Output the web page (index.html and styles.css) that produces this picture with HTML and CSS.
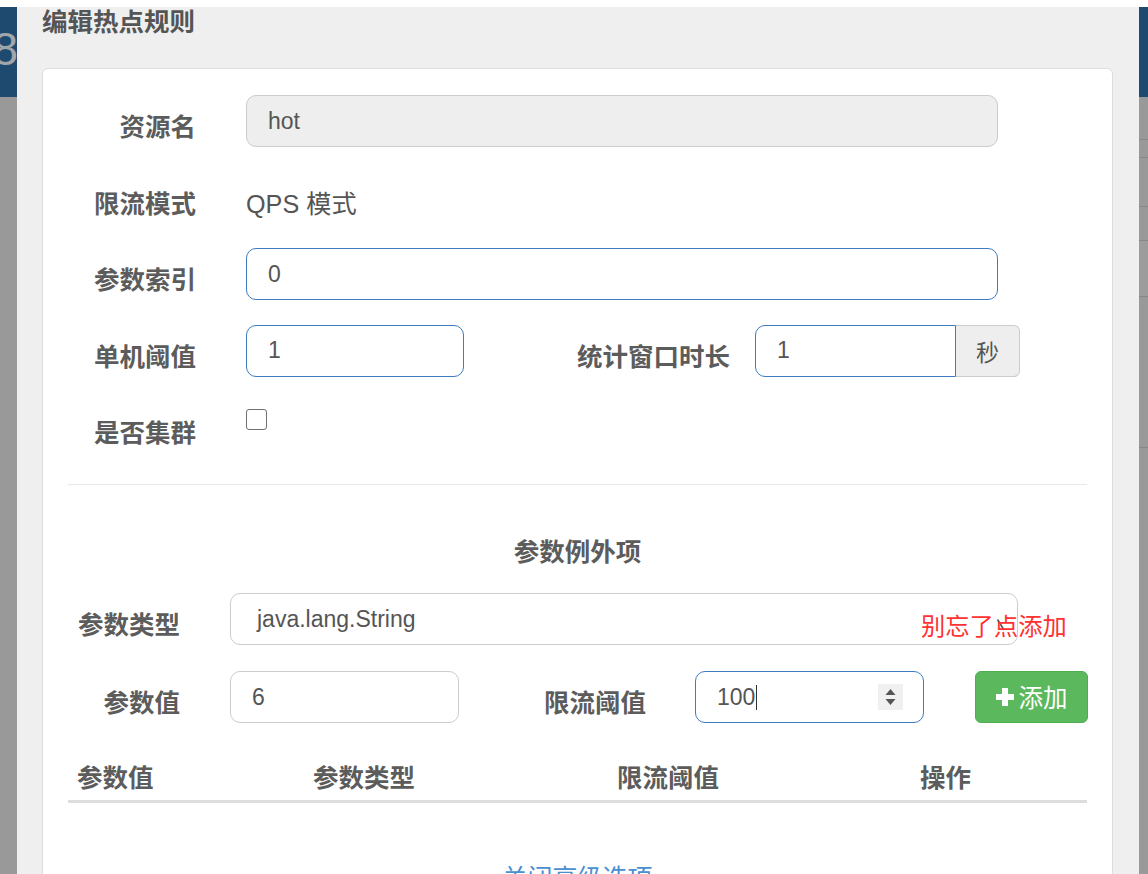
FILE: index.html
```html
<!DOCTYPE html>
<html lang="zh-CN">
<head>
<meta charset="utf-8">
<title>编辑热点规则</title>
<link rel="stylesheet" href="styles.css">
</head>
<body>
<div class="page">
  <div class="page-top"></div>
  <div class="navbar"><span class="brand">8</span></div>
  <div class="bg-rows">
    <div class="bg-row r1"></div>
    <div class="bg-row r2"></div>
    <div class="bg-row r3"></div>
    <div class="bg-row r4"></div>
    <div class="bg-row r5"></div>
    <div class="bg-row r6"></div>
  </div>
</div>

<div class="modal">
  <div class="modal-header">
    <h4 class="modal-title">编辑热点规则</h4>
  </div>
  <div class="card">
    <div class="form-row">
      <label class="lbl lbl-a">资源名</label>
      <div class="field field-wide field-disabled">hot</div>
    </div>
    <div class="form-row">
      <label class="lbl lbl-a">限流模式</label>
      <div class="static">QPS 模式</div>
    </div>
    <div class="form-row">
      <label class="lbl lbl-a">参数索引</label>
      <div class="field field-wide field-focus">0</div>
    </div>
    <div class="form-row">
      <label class="lbl lbl-a">单机阈值</label>
      <div class="field field-short field-focus">1</div>
      <label class="lbl lbl-window">统计窗口时长</label>
      <div class="input-group">
        <div class="field field-group field-focus">1</div>
        <span class="addon">秒</span>
      </div>
    </div>
    <div class="form-row row-check">
      <label class="lbl lbl-a">是否集群</label>
      <span class="checkbox"></span>
    </div>

    <hr class="divider">

    <h4 class="section-title">参数例外项</h4>

    <div class="form-row row-type">
      <label class="lbl lbl-b">参数类型</label>
      <div class="field field-select">java.lang.String
        <svg class="select-mark" width="10" height="14" viewBox="0 0 10 14"><path d="M1.5 1.5 L8 12" stroke="#555" stroke-width="1.6" fill="none"/></svg>
      </div>
      <span class="annotation">别忘了点添加</span>
    </div>
    <div class="form-row">
      <label class="lbl lbl-b">参数值</label>
      <div class="field field-value">6</div>
      <label class="lbl lbl-limit">限流阈值</label>
      <div class="field field-value field-focus field-number">100<span class="caret"></span>
        <span class="spinner">
          <svg width="25" height="26" viewBox="0 0 25 26"><path d="M7.5 11 L12.5 5 L17.5 11 Z" fill="#555"/><path d="M7.5 15 L17.5 15 L12.5 21 Z" fill="#555"/></svg>
        </span>
      </div>
      <button class="btn-add" type="button">
        <svg class="plus" width="18" height="18" viewBox="0 0 18 18"><path d="M6 0h6v6h6v6h-6v6h-6v-6h-6v-6h6z" fill="#fff"/></svg>
        <span>添加</span>
      </button>
    </div>

    <div class="table-head">
      <div class="th">参数值</div>
      <div class="th">参数类型</div>
      <div class="th">限流阈值</div>
      <div class="th">操作</div>
    </div>

    <div class="toggle-link"><a class="link">关闭高级选项</a></div>
  </div>
</div>
</body>
</html>
```

FILE: styles.css
```css
* { box-sizing: border-box; }

html, body {
  margin: 0;
  padding: 0;
  width: 1148px;
  height: 874px;
  overflow: hidden;
}

body {
  position: relative;
  background: #999999;
  font-family: "Liberation Sans", "Noto Sans CJK SC", sans-serif;
}

/* background page (dimmed) */
.page-top {
  height: 7px;
  background: #ffffff;
}

.navbar {
  height: 90px;
  background: #1e4a70;
  padding-top: 19px;
}

.brand {
  display: flex;
  justify-content: flex-end;
  width: 18px;
  overflow: hidden;
  font-size: 46px;
  line-height: 46px;
  color: #a1a5aa;
}

.bg-rows {
  margin-left: 1000px;
}

.bg-row {
  border-bottom: 1px solid #878787;
}

.r1 { height: 43px; }
.r2 { height: 18px; }
.r3 { height: 49px; }
.r4 { height: 34px; }
.r5 { height: 56px; background: #9c9c9c; }
.r6 { height: 151px; }

/* modal */
.modal {
  position: absolute;
  left: 17px;
  top: 7px;
  width: 1122px;
  height: 900px;
  background: #efefef;
}

.modal-header {
  height: 61px;
  padding-left: 25px;
}

.modal-title {
  margin: 0;
  padding-top: 0;
  font-family: "Noto Sans CJK SC", sans-serif;
  font-size: 25.5px;
  line-height: 25px;
  font-weight: bold;
  color: #555555;
}

.card {
  margin-left: 25px;
  width: 1071px;
  height: 900px;
  background: #ffffff;
  border: 1px solid #dddddd;
  border-radius: 6px;
  padding: 26px 25px 0 25px;
}

/* form rows */
.form-row {
  position: relative;
  display: flex;
  align-items: flex-start;
  height: 52px;
  margin-bottom: 24.5px;
}

.lbl {
  flex: none;
  font-family: "Noto Sans CJK SC", sans-serif;
  font-size: 25.5px;
  line-height: 30px;
  font-weight: bold;
  color: #5c5c5c;
  text-align: right;
  padding-top: 15px;
  white-space: nowrap;
}

.lbl-a { width: 128px; margin-right: 50px; }
.lbl-b { width: 112px; margin-right: 50px; }
.lbl-window { width: 266px; margin-right: 25px; }
.lbl-limit { width: 187px; margin-right: 49px; }

.static {
  font-size: 25.2px;
  line-height: 30px;
  padding-top: 17px;
  color: #555555;
  white-space: nowrap;
}

.field {
  position: relative;
  flex: none;
  display: flex;
  align-items: center;
  height: 52px;
  padding: 0 21px;
  border: 1px solid #cccccc;
  border-radius: 10px;
  background: #ffffff;
  font-size: 23px;
  color: #555555;
  white-space: nowrap;
}

.field-wide { width: 752px; }
.field-short { width: 218px; }
.field-disabled { background: #eeeeee; }
.field-focus { border-color: #3d7cbf; }

.input-group {
  display: flex;
  flex: none;
}

.field-group {
  width: 201px;
  border-radius: 10px 0 0 10px;
}

.addon {
  display: flex;
  align-items: center;
  justify-content: center;
  width: 64px;
  height: 52px;
  background: #eeeeee;
  border: 1px solid #cccccc;
  border-left: none;
  border-radius: 0 6px 6px 0;
  font-size: 23px;
  color: #555555;
}

.row-check { margin-bottom: 31px; }

.checkbox {
  display: block;
  width: 21px;
  height: 21px;
  margin-top: 8px;
  border: 1px solid #707070;
  border-radius: 3px;
  background: #ffffff;
}

.divider {
  margin: 0;
  border: none;
  border-top: 1px solid #e8e8e8;
}

.section-title {
  margin: 47px 0 25px 0;
  font-family: "Noto Sans CJK SC", sans-serif;
  font-size: 25.5px;
  line-height: 36px;
  font-weight: bold;
  color: #5c5c5c;
  text-align: center;
}

.row-type { margin-bottom: 26px; }

.field-select {
  width: 788px;
  padding-left: 26px;
}

.select-mark {
  position: absolute;
  left: 765px;
  top: 24px;
}

.annotation {
  position: absolute;
  left: 853px;
  top: 17px;
  font-family: "Noto Sans CJK SC", sans-serif;
  font-size: 24.3px;
  line-height: 30px;
  color: #ff3131;
  white-space: nowrap;
}

.field-value { width: 229px; }

.caret {
  display: inline-block;
  width: 1px;
  height: 25px;
  margin-left: 1px;
  background: #333333;
}

.spinner {
  position: absolute;
  right: 20px;
  top: 12px;
  width: 25px;
  height: 26px;
  background: #f0f0f0;
}

.spinner svg { display: block; }

.btn-add {
  flex: none;
  display: flex;
  align-items: center;
  justify-content: center;
  gap: 5px;
  width: 113px;
  height: 52px;
  margin-left: 51px;
  padding: 0;
  background: #5cb85c;
  border: 1px solid #4cae4c;
  border-radius: 6px;
  color: #ffffff;
  font-family: "Noto Sans CJK SC", sans-serif;
  font-size: 24.5px;
  line-height: 30px;
}

.plus { display: block; flex: none; }

.table-head {
  display: grid;
  grid-template-columns: 236px 304px 303px 1fr;
  margin-top: 28px;
  border-bottom: 3px solid #dddddd;
}

.th {
  padding: 9.5px 9px;
  font-family: "Noto Sans CJK SC", sans-serif;
  font-size: 25.5px;
  line-height: 30px;
  font-weight: bold;
  color: #5c5c5c;
  white-space: nowrap;
}

.toggle-link {
  margin-top: 56px;
  text-align: center;
}

.link {
  font-family: "Noto Sans CJK SC", sans-serif;
  font-size: 25px;
  line-height: 34px;
  color: #4a8fd0;
}
```
